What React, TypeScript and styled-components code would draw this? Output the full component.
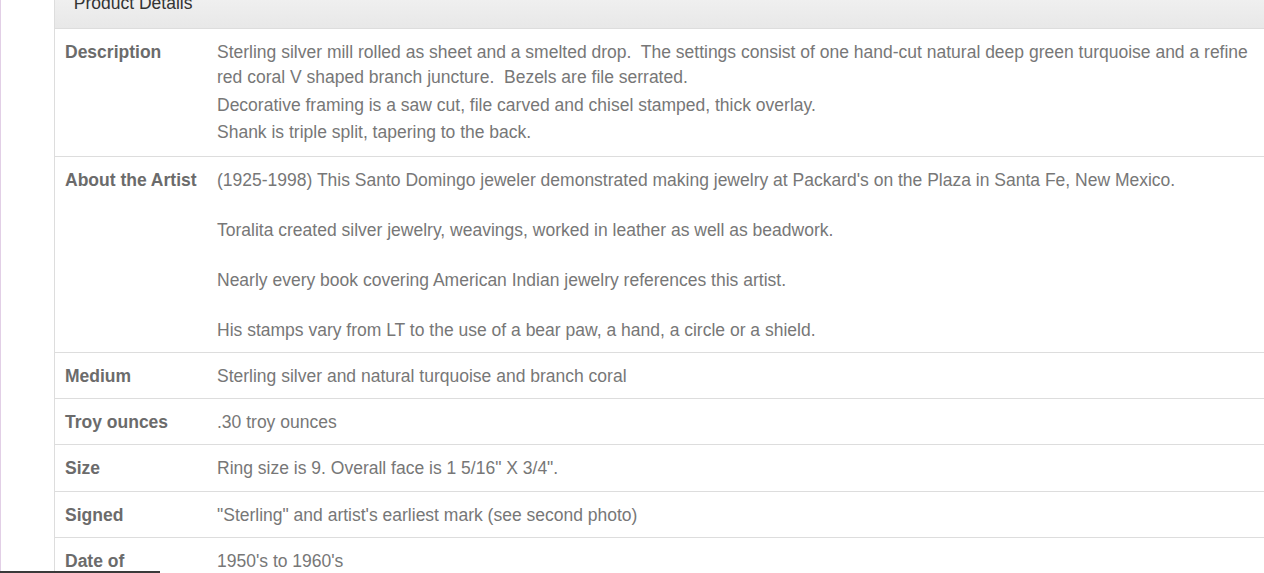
import React from "react";
import styled, { createGlobalStyle } from "styled-components";

const GlobalStyle = createGlobalStyle`
  html, body {
    margin: 0;
    padding: 0;
    background: #ffffff;
    overflow: hidden;
  }
  body {
    font-family: "Liberation Sans", Arial, Helvetica, sans-serif;
    font-size: 17.5px;
    line-height: 25px;
  }
`;

const Page = styled.div`
  min-height: 573px;
  border-left: 1px solid #e2cfe6;
  padding-left: 53px;
`;

const Panel = styled.div`
  width: 1230px;
  margin-top: -23px;
  border: 1px solid #dddddd;
  border-right: none;
  background: #ffffff;
`;

const PanelHeading = styled.div`
  padding: 12.5px 18.75px;
  color: #333333;
  background: linear-gradient(to bottom, #f5f5f5 0%, #e8e8e8 100%);
  border-bottom: 1px solid #dddddd;
`;

const Row = styled.div<{ $first?: boolean }>`
  display: grid;
  grid-template-columns: 152px 1fr;
  border-top: ${(p) => (p.$first ? "none" : "1px solid #dddddd")};
`;

const Label = styled.div`
  padding: 11px 10px 9.25px;
  font-weight: bold;
  color: #6b6b6b;
  white-space: nowrap;
`;

const Value = styled.div<{ $bottom?: number }>`
  padding: 11px 10px ${(p) => p.$bottom ?? 9.25}px 10px;
  color: #777777;
`;

const Para = styled.p<{ $gap: number }>`
  margin: 0 0 ${(p) => p.$gap}px 0;
  &:last-child {
    margin-bottom: 0;
  }
`;

const BottomEdge = styled.div`
  position: fixed;
  left: 0;
  bottom: 0;
  width: 160px;
  height: 2px;
  background: #3a3a3a;
`;

type Detail = {
  label: string;
  paras: string[];
  gap?: number;
  bottom?: number;
};

const details: Detail[] = [
  {
    label: "Description",
    gap: 2.5,
    bottom: 10.5,
    paras: [
      "Sterling silver mill rolled as sheet and a smelted drop.\u00a0 The settings consist of one hand-cut natural deep green turquoise and a refine red coral V shaped branch juncture.\u00a0 Bezels are file serrated.",
      "Decorative framing is a saw cut, file carved and chisel stamped, thick overlay.",
      "Shank is triple split, tapering to the back.",
    ],
  },
  {
    label: "About the Artist",
    gap: 25,
    paras: [
      "(1925-1998) This Santo Domingo jeweler demonstrated making jewelry at Packard's on the Plaza in Santa Fe, New Mexico.",
      "Toralita created silver jewelry, weavings, worked in leather as well as beadwork.",
      "Nearly every book covering American Indian jewelry references this artist.",
      "His stamps vary from LT to the use of a bear paw, a hand, a circle or a shield.",
    ],
  },
  { label: "Medium", paras: ["Sterling silver and natural turquoise and branch coral"] },
  { label: "Troy ounces", paras: [".30 troy ounces"] },
  { label: "Size", paras: ['Ring size is 9. Overall face is 1 5/16" X 3/4".'] },
  { label: "Signed", paras: ['"Sterling" and artist\'s earliest mark (see second photo)'] },
  { label: "Date of", paras: ["1950's to 1960's"] },
];

export default function App() {
  return (
    <Page>
      <GlobalStyle />
      <Panel>
        <PanelHeading>Product Details</PanelHeading>
        {details.map((d, i) => (
          <Row key={d.label} $first={i === 0}>
            <Label>{d.label}</Label>
            <Value $bottom={d.bottom}>
              {d.paras.map((t, j) => (
                <Para key={j} $gap={d.gap ?? 0}>
                  {t}
                </Para>
              ))}
            </Value>
          </Row>
        ))}
      </Panel>
      <BottomEdge />
    </Page>
  );
}
